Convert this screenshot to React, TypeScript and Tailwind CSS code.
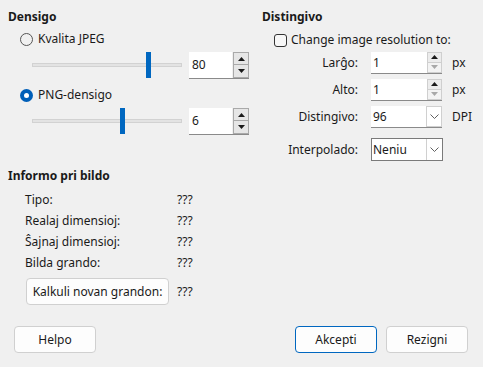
import React from "react";

const Up = ({ c = "#1a1a1a" }: { c?: string }) => (
  <svg width="7" height="4" viewBox="0 0 7 4"><polygon points="0,4 7,4 3.5,0" fill={c} /></svg>
);
const Down = ({ c = "#1a1a1a" }: { c?: string }) => (
  <svg width="7" height="4" viewBox="0 0 7 4"><polygon points="0,0 7,0 3.5,4" fill={c} /></svg>
);
const Chevron = () => (
  <svg width="9" height="5" viewBox="0 0 9 5"><polyline points="0.5,0.5 4.5,4.5 8.5,0.5" fill="none" stroke="#606060" strokeWidth="1" /></svg>
);

function SliderRow({ thumb, value }: { thumb: number; value: string }) {
  return (
    <div className="flex items-center h-[27px]">
      <div className="relative ml-[24px] w-[150px] h-[27px]">
        <div className="absolute left-0 right-0 top-[11px] h-[4px] bg-[#e3e3e3] border border-[#d2d2d2]" />
        <div className="absolute top-0 w-[5px] h-[26px] bg-[#0067c0]" style={{ left: thumb }} />
      </div>
      <div className="ml-[7px] flex h-[27px] border-b border-[#8a8a8a]">
        <div className="w-[43px] bg-white pl-[3px] flex items-center text-[12px]">{value}</div>
        <div className="w-[16px] flex flex-col ml-[1px] bg-white">
          <div className="h-[13px] border border-[#a9a9a9] bg-[#e6e6e6] flex items-center justify-center"><Up /></div>
          <div className="h-[13px] border border-t-0 border-[#a9a9a9] bg-[#e6e6e6] flex items-center justify-center"><Down /></div>
        </div>
      </div>
    </div>
  );
}

function Radio({ checked, label }: { checked: boolean; label: string }) {
  return (
    <div className="flex items-center h-[16px] pl-[12px]">
      {checked ? (
        <div className="w-[13px] h-[13px] rounded-full bg-[#005fb8] flex items-center justify-center">
          <div className="w-[5px] h-[5px] rounded-full bg-white" />
        </div>
      ) : (
        <div className="w-[13px] h-[13px] rounded-full border border-[#555]" />
      )}
      <span className="ml-[5px]">{label}</span>
    </div>
  );
}

function FormRow({ label, children, h = "h-[22px]" }: { label: string; children: React.ReactNode; h?: string }) {
  return (
    <div className={`flex items-center ${h}`}>
      <div className="w-[104px] text-right">{label}</div>
      <div className="ml-[13px] flex items-center">{children}</div>
    </div>
  );
}

function SpinR() {
  return (
    <div className="flex h-[22px] border-b border-[#8a8a8a]">
      <div className="w-[54px] bg-white pl-[2px] flex items-center">1</div>
      <div className="w-[17px] flex flex-col bg-white pl-[2px]">
        <div className="h-[11px] border border-[#cfcfcf] bg-[#ececec] flex items-center justify-center"><Up c="#1a1a1a" /></div>
        <div className="h-[11px] border border-t-0 border-[#cfcfcf] bg-[#f3f3f3] flex items-center justify-center"><Down c="#a8a8a8" /></div>
      </div>
    </div>
  );
}

function Btn({ children, w, primary }: { children: React.ReactNode; w: string; primary?: boolean }) {
  return (
    <div
      className={`${w} h-[27px] rounded-[4px] bg-[#fdfdfd] flex items-center justify-center border ${
        primary ? "border-[#0067c0]" : "border-[#d0d0d0]"
      }`}
    >
      {children}
    </div>
  );
}

export default function App() {
  return (
    <div
      className="w-[483px] h-[367px] bg-[#f0f0f0] text-[#1a1a1a] text-[12px] leading-[16px] overflow-hidden"
      style={{ fontFamily: '"Noto Sans", "Open Sans", sans-serif' }}
    >
      <div className="flex items-start pt-[9px]">
        <div className="w-[254px] pl-[8px] flex flex-col">
          <div className="font-bold h-[16px]">Densigo</div>
          <div className="mt-[6px]"><Radio checked={false} label="Kvalita JPEG" /></div>
          <div className="mt-[5px]"><SliderRow thumb={114} value="80" /></div>
          <div className="mt-[8px]"><Radio checked={true} label="PNG-densigo" /></div>
          <div className="mt-[5px]"><SliderRow thumb={88} value="6" /></div>
        </div>
        <div className="flex flex-col">
          <div className="font-bold h-[16px] ml-[8px]">Distingivo</div>
          <div className="mt-[7px] flex items-center h-[16px] pl-[20px]">
            <div className="w-[13px] h-[13px] rounded-[3px] border border-[#333] bg-[#f7f7f7]" />
            <span className="ml-[4px]">Change image resolution to:</span>
          </div>
          <div className="mt-[4px]">
            <FormRow label="Larĝo:">
              <SpinR />
              <span className="ml-[10px]">px</span>
            </FormRow>
          </div>
          <div className="mt-[5px]">
            <FormRow label="Alto:">
              <SpinR />
              <span className="ml-[10px]">px</span>
            </FormRow>
          </div>
          <div className="mt-[5px]">
            <FormRow label="Distingivo:">
              <div className="flex h-[22px] border-b border-[#8a8a8a] bg-white">
                <div className="w-[55px] pl-[2px] flex items-center">96</div>
                <div className="w-[16px] border border-[#d0d0d0] flex items-center justify-center"><Chevron /></div>
              </div>
              <span className="ml-[10px]">DPI</span>
            </FormRow>
          </div>
          <div className="mt-[10px]">
            <FormRow label="Interpolado:" h="h-[23px]">
              <div className="flex h-[23px] border border-[#7a7a7a] bg-white w-[72px]">
                <div className="flex-1 pl-[1px] flex items-center">Neniu</div>
                <div className="w-[16px] border-l border-[#d0d0d0] flex items-center justify-center"><Chevron /></div>
              </div>
            </FormRow>
          </div>
        </div>
      </div>

      <div className="mt-[7px] pl-[8px]">
        <div className="font-bold h-[16px]">Informo pri bildo</div>
        <div className="mt-[5px] flex flex-col">
          {[
            ["Tipo:", "???"],
            ["Realaj dimensioj:", "???"],
            ["Ŝajnaj dimensioj:", "???"],
            ["Bilda grando:", "???"],
          ].map(([l, v]) => (
            <div key={l} className="flex items-center h-[21px]">
              <div className="w-[152px] pl-[17px]">{l}</div>
              <div className="ml-[17px]">{v}</div>
            </div>
          ))}
        </div>
        <div className="mt-[5px] flex items-center pl-[18px]">
          <Btn w="w-[143px]">Kalkuli novan grandon:</Btn>
          <span className="ml-[8px]">???</span>
        </div>
      </div>

      <div className="mt-[21px] flex items-center px-[14px]">
        <Btn w="w-[82px]">Helpo</Btn>
        <div className="flex-1" />
        <Btn w="w-[82px]" primary>Akcepti</Btn>
        <div className="ml-[9px]"><Btn w="w-[82px]">Rezigni</Btn></div>
        <div className="w-[1px]" />
      </div>
    </div>
  );
}
